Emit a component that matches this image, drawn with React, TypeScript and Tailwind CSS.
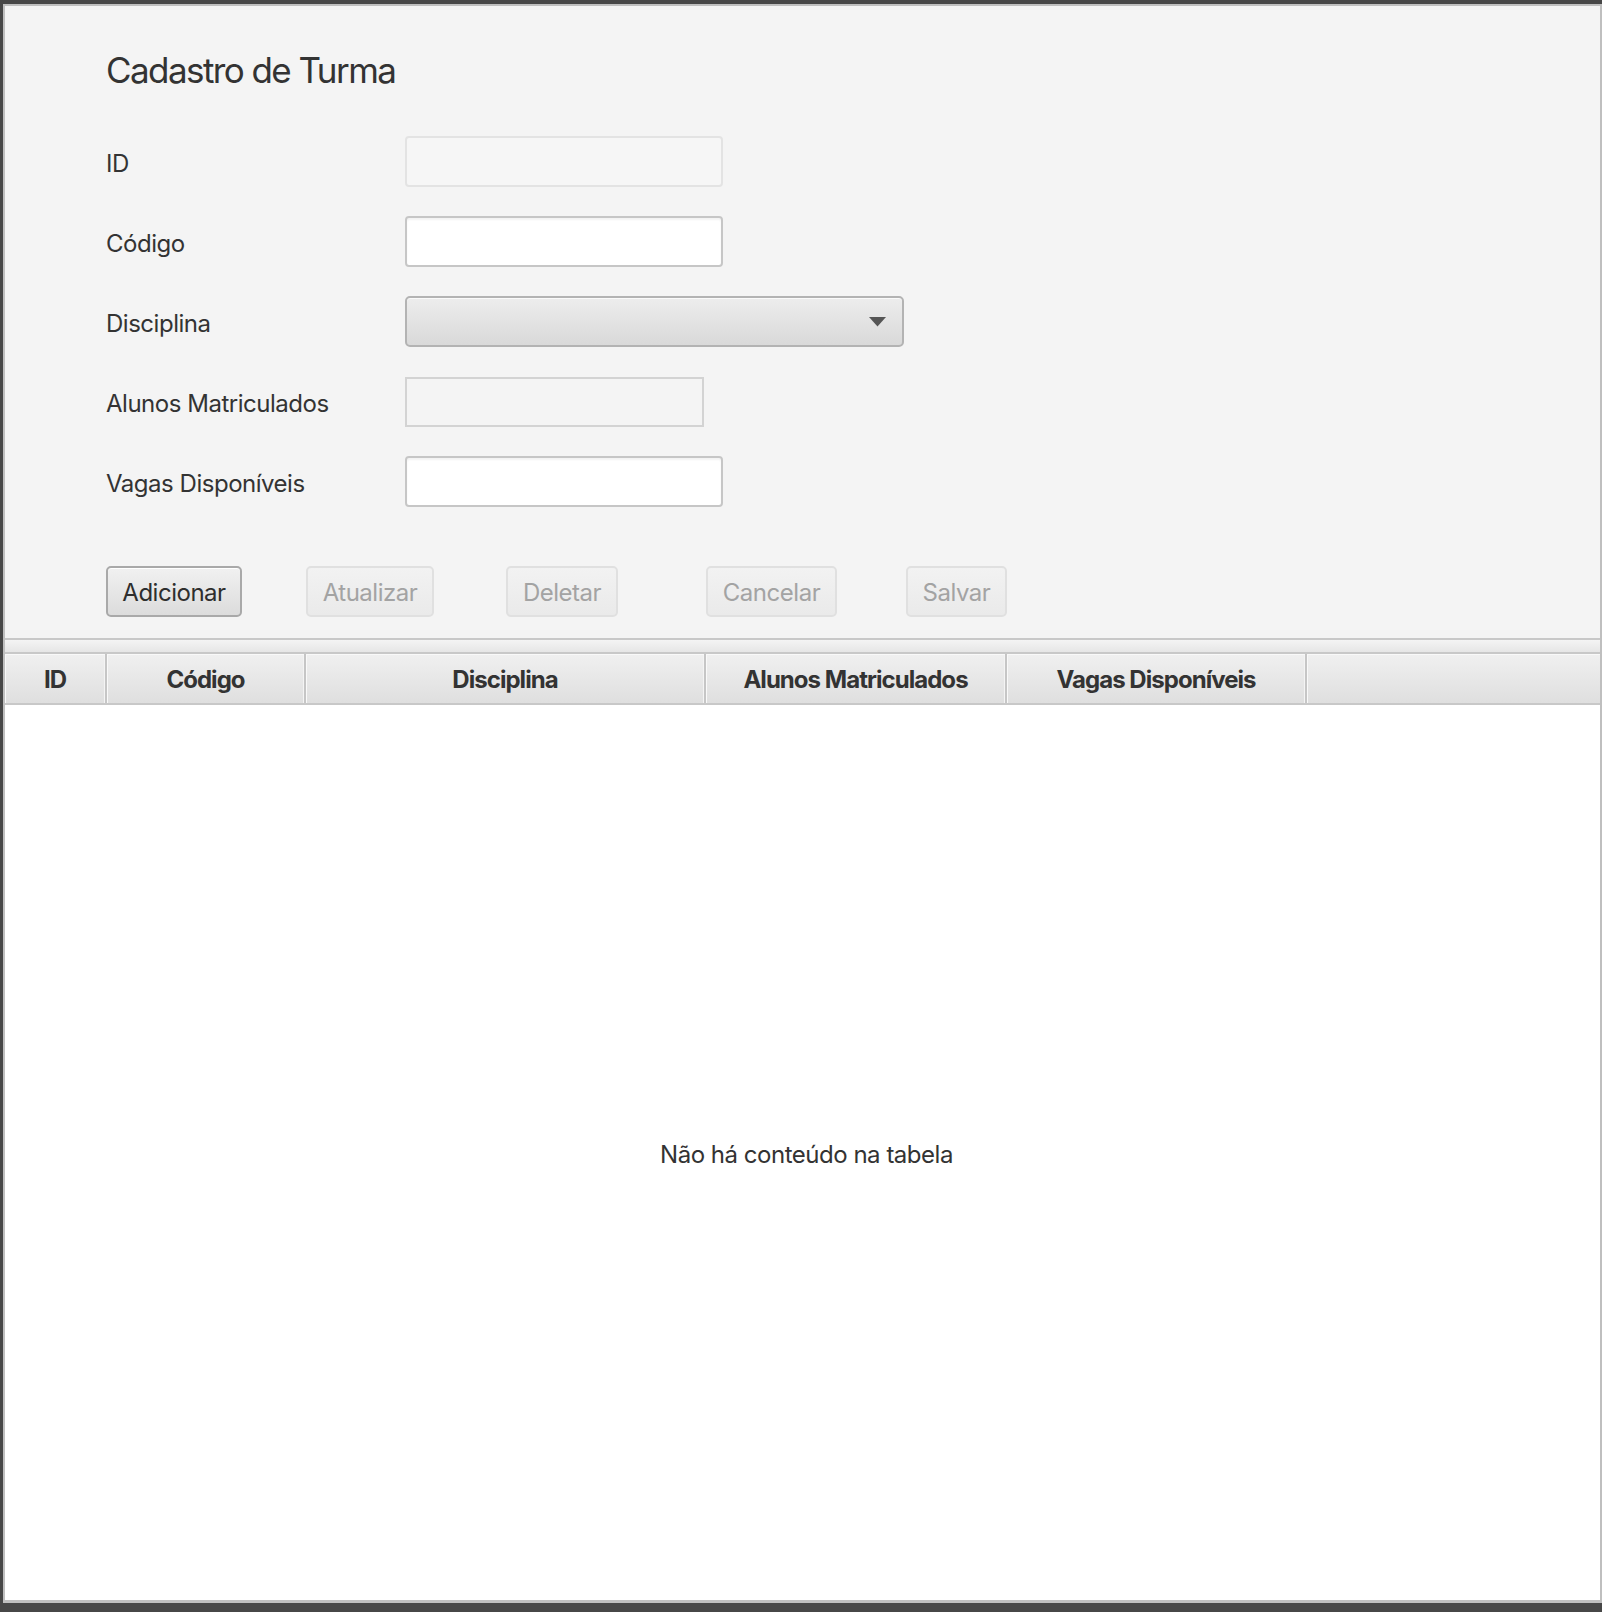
const font = { fontFamily: 'Inter, "Noto Sans", sans-serif' };

type Field = { label: string; kind: "disabled" | "text" | "combo" | "plain"; width: string };

const fields: Field[] = [
  { label: "ID", kind: "disabled", width: "w-[318px]" },
  { label: "Código", kind: "text", width: "w-[318px]" },
  { label: "Disciplina", kind: "combo", width: "w-[499px]" },
  { label: "Alunos Matriculados", kind: "plain", width: "w-[299px]" },
  { label: "Vagas Disponíveis", kind: "text", width: "w-[318px]" },
];

const buttons = [
  { label: "Adicionar", width: "w-[136px]", enabled: true },
  { label: "Atualizar", width: "w-[128px]", enabled: false },
  { label: "Deletar", width: "w-[112px]", enabled: false },
  { label: "Cancelar", width: "w-[131px]", enabled: false },
  { label: "Salvar", width: "w-[101px]", enabled: false },
];

const columns = [
  { label: "ID", width: "w-[102px]" },
  { label: "Código", width: "w-[199px]" },
  { label: "Disciplina", width: "w-[400px]" },
  { label: "Alunos Matriculados", width: "w-[301px]" },
  { label: "Vagas Disponíveis", width: "w-[300px]" },
];

function Input({ field }: { field: Field }) {
  if (field.kind === "combo") {
    return (
      <div
        className={`${field.width} flex h-[51px] items-center justify-end rounded-[5px] border-2 border-[#b3b3b3] bg-linear-to-b from-[#ededed] to-[#d9d9d9] pr-[16px] shadow-[inset_0_1px_0_#fafafa]`}
      >
        <svg width="17" height="10" viewBox="0 0 17 10">
          <path d="M0 0 H17 L8.5 9.5 Z" fill="#555555" />
        </svg>
      </div>
    );
  }
  if (field.kind === "disabled") {
    return <div className={`${field.width} h-[51px] rounded-[4px] border-2 border-[#e3e3e3] bg-[#f6f6f6]`} />;
  }
  if (field.kind === "plain") {
    return <div className={`${field.width} h-[50px] border-2 border-[#d3d3d3] bg-[#f4f4f4]`} />;
  }
  return (
    <div
      className={`${field.width} h-[51px] rounded-[4px] border-2 border-[#c6c6c6] bg-white shadow-[inset_0_2px_2px_rgba(0,0,0,0.05)]`}
    />
  );
}

export default function App() {
  return (
    <div className="h-[1612px] w-[1602px] bg-[#474747] pl-[3px] pt-[4px]" style={font}>
      <div className="flex h-[1599px] w-[1599px] flex-col border-x-2 border-t-2 border-b-[3px] border-[#bfbfbf] bg-white">
        {/* Form */}
        <div className="h-[632px] shrink-0 bg-[#f4f4f4] pl-[101px] pt-[42px] text-[#333333]">
          <h1 className="h-[44px] text-[35px] leading-[44px] tracking-[-0.045em]">Cadastro de Turma</h1>

          <div className="mt-[44px] flex flex-col gap-[29px]">
            {fields.map((f) => (
              <div key={f.label} className="flex h-[51px] items-center">
                <span className="w-[299px] pt-[4px] text-[24px] tracking-[-0.02em]">{f.label}</span>
                <Input field={f} />
              </div>
            ))}
          </div>

          <div className="mt-[59px] grid grid-cols-[repeat(5,200px)]">
            {buttons.map((b) => (
              <div key={b.label}>
                <div
                  className={
                    b.enabled
                      ? `${b.width} flex h-[51px] items-center justify-center rounded-[5px] border-2 border-[#a9a9a9] bg-linear-to-b from-[#f1f1f1] to-[#dcdcdc] pt-[2px] text-[24px] tracking-[-0.02em] text-[#2e2e2e] shadow-[inset_0_1px_0_#ffffff]`
                      : `${b.width} flex h-[51px] items-center justify-center rounded-[5px] border-2 border-[#e0e0e0] bg-linear-to-b from-[#f2f2f2] to-[#eaeaea] pt-[2px] text-[24px] tracking-[-0.02em] text-[#a3a3a3]`
                  }
                >
                  {b.label}
                </div>
              </div>
            ))}
          </div>
        </div>

        <div className="h-[2px] shrink-0 bg-[#c8c8c8]" />

        {/* Table */}
        <div className="flex flex-1 flex-col">
          <div className="h-[12px] shrink-0 bg-linear-to-b from-[#f4f4f4] to-[#e6e6e6]" />
          <div className="h-[2px] shrink-0 bg-[#c8c8c8]" />
          <div className="flex h-[51px] shrink-0 border-b-2 border-[#c8c8c8]">
            {columns.map((c) => (
              <div key={c.label} className={`${c.width} shrink-0 border-r-2 border-[#c6c6c6]`}>
                <div className="flex h-full items-center justify-center bg-linear-to-b from-[#f0f0f0] to-[#dfdfdf] pt-[2px] text-[24px] font-bold tracking-[-0.04em] text-[#333333] shadow-[inset_1px_1px_0_#f9f9f9,inset_-1px_0_0_#f4f4f4]">
                  {c.label}
                </div>
              </div>
            ))}
            <div className="flex-1 bg-linear-to-b from-[#f0f0f0] to-[#dfdfdf] shadow-[inset_1px_1px_0_#f9f9f9]" />
          </div>
          <div className="flex flex-1 items-center justify-center bg-white pl-[8px] pt-[4px] text-[24px] tracking-[-0.02em] text-[#333333]">
            Não há conteúdo na tabela
          </div>
        </div>
      </div>
    </div>
  );
}
